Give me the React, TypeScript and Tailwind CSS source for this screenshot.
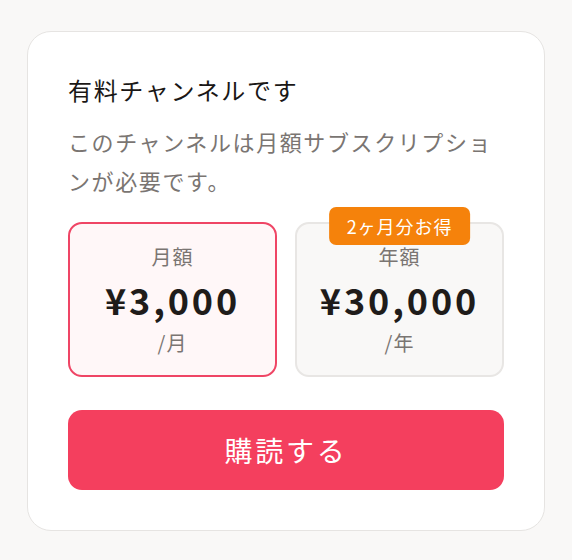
import React, { useState } from 'react';

type Plan = {
    id: string;
    label: string;
    price: string;
    unit: string;
    badge?: string;
};

const plans: Plan[] = [
    { id: 'monthly', label: '月額', price: '¥3,000', unit: '/月' },
    { id: 'yearly', label: '年額', price: '¥30,000', unit: '/年', badge: '2ヶ月分お得' },
];

const App = () => {
    const [selected, setSelected] = useState('monthly');

    return (
        <div
            className="min-h-[560px] w-full bg-[#f9f8f7] px-[27px] pt-[31px] tracking-[0.06em]"
            style={{ fontFamily: '"Noto Sans CJK JP", "Noto Sans", sans-serif' }}
        >
            <div className="w-[518px] rounded-[24px] border border-[#e6e4e2] bg-white p-10">
                <h2 className="text-[24px] leading-[36px] font-normal tracking-[0.07em] text-[#1a1716]">有料チャンネルです</h2>
                <p className="mt-[14px] text-[22px] leading-[39px] tracking-[1.6px] text-[#7a7572]">
                    このチャンネルは月額サブスクリプションが必要です。
                </p>

                <div className="mt-[22px] grid grid-cols-2 gap-[18px]">
                    {plans.map((plan) => {
                        const active = selected === plan.id;
                        return (
                            <button
                                key={plan.id}
                                onClick={() => setSelected(plan.id)}
                                className={`relative flex h-[155px] flex-col items-center justify-center rounded-[14px] border-2 tracking-[0.06em] ${active
                                    ? 'border-[#ef4565] bg-[#fff7f8]'
                                    : 'border-[#e8e6e4] bg-[#f9f8f7]'
                                    }`}
                            >
                                {plan.badge && (
                                    <span className="absolute left-1/2 top-[-17px] -translate-x-1/2 rounded-[7px] bg-[#f5820b] px-[18px] text-[18px] leading-[38px] font-normal whitespace-nowrap text-white">
                                        {plan.badge}
                                    </span>
                                )}
                                <span className="text-[20px] leading-[30px] text-[#7a7572]">{plan.label}</span>
                                <span className="mt-[2px] text-[36px] leading-[50px] font-bold tracking-[0.08em] text-[#1f1c1a]">{plan.price}</span>
                                <span className="mt-[4px] text-[20px] leading-[30px] text-[#7a7572]">{plan.unit}</span>
                            </button>
                        );
                    })}
                </div>

                <button className="mt-[33px] h-[80px] w-full rounded-[14px] bg-[#f43f5e] text-[28px] font-normal tracking-[0.1em] text-white">
                    購読する
                </button>
            </div>
        </div>
    );
};

export default App;
